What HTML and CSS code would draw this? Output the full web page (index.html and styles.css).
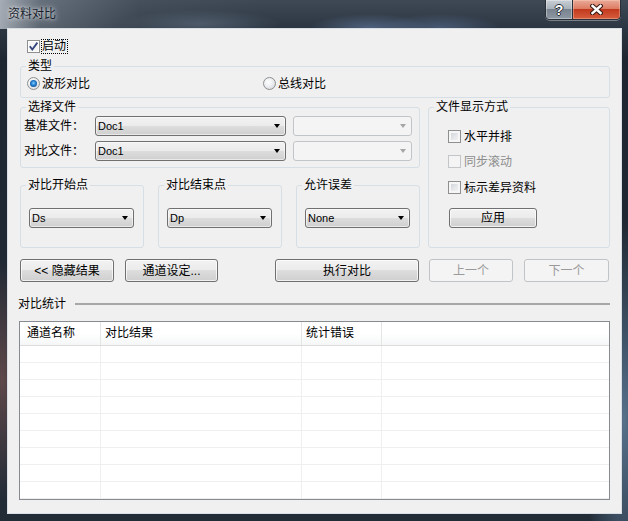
FILE: index.html
```html
<!DOCTYPE html>
<html lang="zh-CN">
<head>
<meta charset="utf-8">
<title>资料对比</title>
<link rel="stylesheet" href="styles.css">
</head>
<body>
<div class="window">
  <div class="titlebar">
    <div class="title">资料对比</div>
    <div class="caption-btns">
      <div class="cap help">?</div>
      <div class="cap close">
        <svg width="13" height="11" viewBox="0 0 13 11"><path d="M2.5 2 L10.5 9 M10.5 2 L2.5 9" stroke="#3b1d16" stroke-width="4.6" stroke-linecap="square" fill="none"/><path d="M2.5 2 L10.5 9 M10.5 2 L2.5 9" stroke="#ffffff" stroke-width="2.4" stroke-linecap="square" fill="none"/></svg>
      </div>
    </div>
  </div>
  <div class="client">
    <div class="enable-row">
      <span class="cb"><svg width="11" height="11" viewBox="0 0 11 11"><path d="M1.8 5.2 L4.3 8.6 L9.4 1.6" stroke="#33437c" stroke-width="1.8" fill="none"/></svg></span><span class="focus-label">启动</span>
    </div>
    <fieldset class="group type-group">
      <legend>类型</legend>
      <div class="type-body">
        <div class="radio-item first"><span class="radio on"></span><span>波形对比</span></div>
        <div class="radio-item"><span class="radio"></span><span>总线对比</span></div>
      </div>
    </fieldset>
    <div class="middle">
      <div class="left-col">
        <fieldset class="group file-group">
          <legend>选择文件</legend>
          <div class="file-body">
            <div class="file-row"><span class="file-label">基准文件：</span><div class="combo main"><span class="combo-text">Doc1</span><i class="arrow"></i></div><div class="combo small disabled"><i class="arrow"></i></div></div>
            <div class="file-row"><span class="file-label">对比文件：</span><div class="combo main"><span class="combo-text">Doc1</span><i class="arrow"></i></div><div class="combo small disabled"><i class="arrow"></i></div></div>
          </div>
        </fieldset>
        <div class="point-row">
          <fieldset class="group point-group">
            <legend>对比开始点</legend>
            <div class="point-body"><div class="combo pt"><span class="combo-text">Ds</span><i class="arrow"></i></div></div>
          </fieldset>
          <fieldset class="group point-group">
            <legend>对比结束点</legend>
            <div class="point-body"><div class="combo pt"><span class="combo-text">Dp</span><i class="arrow"></i></div></div>
          </fieldset>
          <fieldset class="group point-group">
            <legend>允许误差</legend>
            <div class="point-body"><div class="combo pt"><span class="combo-text">None</span><i class="arrow"></i></div></div>
          </fieldset>
        </div>
      </div>
      <fieldset class="group display-group">
        <legend>文件显示方式</legend>
        <div class="display-body">
          <div class="cb-row"><span class="cb"></span><span>水平并排</span></div>
          <div class="cb-row r2 disabled"><span class="cb"></span><span>同步滚动</span></div>
          <div class="cb-row r3"><span class="cb"></span><span>标示差异资料</span></div>
          <button class="btn apply">应用</button>
        </div>
      </fieldset>
    </div>
    <div class="action-row">
      <button class="btn b-hide"><span class="lt">&lt;&lt;</span> 隐藏结果</button>
      <button class="btn b-chan">通道设定<span class="lt">...</span></button>
      <button class="btn b-run">执行对比</button>
      <button class="btn b-prev" disabled>上一个</button>
      <button class="btn b-next" disabled>下一个</button>
    </div>
    <div class="sep-row"><span>对比统计</span><div class="sep-line"></div></div>
    <div class="list">
      <div class="list-head">
        <div class="h c1">通道名称</div>
        <div class="h c2">对比结果</div>
        <div class="h c3">统计错误</div>
        <div class="h c4"></div>
      </div>
      <div class="list-body">
        <div class="row"><div></div><div></div><div></div><div></div></div>
        <div class="row"><div></div><div></div><div></div><div></div></div>
        <div class="row"><div></div><div></div><div></div><div></div></div>
        <div class="row"><div></div><div></div><div></div><div></div></div>
        <div class="row"><div></div><div></div><div></div><div></div></div>
        <div class="row"><div></div><div></div><div></div><div></div></div>
        <div class="row"><div></div><div></div><div></div><div></div></div>
        <div class="row"><div></div><div></div><div></div><div></div></div>
        <div class="row"><div></div><div></div><div></div><div></div></div>
      </div>
    </div>
  </div>
</div>
</body>
</html>
```
FILE: styles.css
```css
* { box-sizing: border-box; }
html, body { margin: 0; padding: 0; }
body {
  width: 628px;
  height: 521px;
  overflow: hidden;
  font-family: "Liberation Sans", "Noto Sans CJK SC", sans-serif;
  font-size: 12px;
  line-height: 14px;
  color: #000;
  background: #1f2832;
}
.window {
  width: 628px;
  height: 521px;
  display: flex;
  flex-direction: column;
  background:
    radial-gradient(ellipse 60px 14px at 370px 28px, rgba(120,150,200,.45), transparent),
    radial-gradient(ellipse 60px 14px at 440px 28px, rgba(110,140,190,.40), transparent),
    radial-gradient(ellipse 80px 14px at 200px 24px, rgba(140,160,185,.30), transparent),
    radial-gradient(ellipse 40px 200px at 624px 420px, rgba(130,170,210,.55), transparent),
    radial-gradient(ellipse 30px 120px at 2px 380px, rgba(170,110,100,.45), transparent),
    linear-gradient(180deg, #3f4956 0px, #2c3642 29px, #1e2731 60px, #222c37 100%);
}
.titlebar {
  flex: none;
  height: 29px;
  display: flex;
  align-items: flex-start;
  padding-left: 8px;
  background: linear-gradient(90deg, rgba(200,206,214,.75) 0px, rgba(150,160,170,.45) 40px, rgba(90,100,112,.25) 140px, rgba(40,50,62,0) 260px);
}
.title {
  margin-top: 7px;
  line-height: 14px;
  color: #141c2c;
  text-shadow: 0 0 6px rgba(255,255,255,.8), 0 0 3px rgba(255,255,255,.7);
}
.caption-btns {
  margin-left: auto;
  margin-right: 7px;
  width: 76px;
  height: 20px;
  display: flex;
  border: 1px solid #2b3038;
  border-top: none;
  border-radius: 0 0 5px 5px;
  overflow: hidden;
  box-shadow: 0 1px 0 rgba(255,255,255,.35);
}
.cap {
  display: flex;
  align-items: center;
  justify-content: center;
}
.help {
  flex: 0 0 27px;
  border-right: 1px solid #2b3038;
  background: linear-gradient(#c9cfd6 0%, #a9b1ba 45%, #79838f 50%, #8e98a3 100%);
  box-shadow: inset 0 0 0 1px rgba(255,255,255,.35);
  color: #fff;
  font-family: "Liberation Sans", sans-serif;
  font-weight: bold;
  font-size: 14px;
  line-height: 14px;
  text-shadow: 1px 0 0 #2a3038, -1px 0 0 #2a3038, 0 1px 0 #2a3038, 0 -1px 0 #2a3038;
}
.close {
  flex: 1;
  background: linear-gradient(#eaab9a 0%, #dc7c63 45%, #c23a1e 50%, #d75d3e 100%);
  box-shadow: inset 0 0 0 1px rgba(255,220,200,.35);
}
.close svg { display: block; }

.client {
  flex: 1;
  margin: 0 7px 8px 8px;
  background: #f0f0f0;
  padding: 10px 11px 0 12px;
  box-shadow: 0 0 0 1px #d9dee4;
}

/* checkbox */
.enable-row {
  display: flex;
  align-items: center;
  height: 15px;
  padding-left: 7px;
}
.cb {
  flex: none;
  width: 13px;
  height: 13px;
  border: 1px solid #8e8f8f;
  background: linear-gradient(135deg, #c9ced4 0%, #e6e8eb 55%, #f7f7f7 100%);
  box-shadow: inset 0 0 0 2px #f6f6f6;
  display: flex;
}
.cb svg { display: block; }
.enable-row .cb { margin-right: 1px; background: #f4f4f4; box-shadow: inset 0 0 0 1px #fff; }
.focus-label {
  border: 1px dotted #000;
  padding: 0 1px 0 0;
  line-height: 13px;
}

/* group boxes */
.group {
  margin: 0;
  padding: 0;
  border: 1px solid #d5dfe5;
  border-radius: 3px;
  min-width: 0;
}
.group legend {
  margin-left: 5px;
  padding: 0 2px;
  line-height: 14px;
  font-size: 12px;
}
.type-group { margin-top: 5px; }
.type-body {
  display: flex;
  padding: 3px 0 6px 6px;
}
.radio-item {
  display: flex;
  align-items: center;
  gap: 2px;
  height: 15px;
}
.radio-item.first { width: 236px; }
.radio {
  flex: none;
  width: 13px;
  height: 13px;
  border-radius: 50%;
  border: 1px solid #8e8f8f;
  background: radial-gradient(circle at 40% 38%, #ffffff 0, #eceef0 45%, #cdd1d6 100%);
  display: flex;
  align-items: center;
  justify-content: center;
}
.radio.on::after {
  content: "";
  width: 7px;
  height: 7px;
  border-radius: 50%;
  background: radial-gradient(circle at 50% 45%, #7fd0ff 0, #1f79cc 45%, #0d3a6e 100%);
}

.middle {
  display: flex;
  gap: 8px;
  margin-top: 2px;
}
.left-col {
  width: 400px;
  display: flex;
  flex-direction: column;
}
.file-body {
  display: flex;
  flex-direction: column;
  gap: 5px;
  padding: 2px 0 6px 3px;
}
.file-row {
  display: flex;
  align-items: center;
  height: 20px;
}
.file-label { width: 71px; }

.combo {
  height: 20px;
  display: flex;
  align-items: center;
  padding-left: 2px;
  border: 1px solid #707070;
  border-radius: 3px;
  background: linear-gradient(#f2f2f2 0%, #ebebeb 50%, #dddddd 50%, #cfcfcf 100%);
  box-shadow: inset 0 0 0 1px rgba(255,255,255,.55);
}
.combo-text {
  font-family: "Liberation Sans", sans-serif;
  font-size: 11px;
  line-height: 14px;
}
.arrow {
  margin-left: auto;
  margin-right: 5px;
  width: 0;
  height: 0;
  border-left: 3.5px solid transparent;
  border-right: 3.5px solid transparent;
  border-top: 4px solid #000;
}
.combo.main { width: 191px; }
.combo.small { width: 119px; margin-left: 7px; }
.combo.disabled {
  border-color: #c1c5c9;
  background: #f4f4f4;
  box-shadow: none;
}
.combo.disabled .arrow { border-top-color: #a6a6a6; }

.point-row {
  display: flex;
  gap: 14px;
  margin-top: 10px;
}
.point-group { width: 124px; }
.point-body { padding: 16px 0 19px 8px; }
.combo.pt { width: 105px; }

.display-group { width: 182px; }
.display-body {
  display: flex;
  flex-direction: column;
  align-items: flex-start;
  padding: 15px 0 19px 19px;
}
.cb-row {
  display: flex;
  align-items: center;
  gap: 3px;
  height: 15px;
}
.cb-row.r2 { margin-top: 10px; }
.cb-row.r3 { margin-top: 11px; }
.cb-row.disabled { color: #8d8d8d; }
.cb-row.disabled .cb {
  border-color: #c3c6c9;
  background: #f4f4f4;
  box-shadow: none;
}

/* buttons */
.btn {
  font-family: "Liberation Sans", "Noto Sans CJK SC", sans-serif;
  font-size: 12px;
  line-height: 14px;
  color: #000;
  height: 23px;
  padding: 0;
  margin: 0;
  border: 1px solid #707070;
  border-radius: 3px;
  background: linear-gradient(#f2f2f2 0%, #ebebeb 49%, #dddddd 50%, #cfcfcf 100%);
  box-shadow: inset 0 0 0 1px rgba(255,255,255,.7);
}
.btn:disabled {
  color: #9a9a9a;
  border-color: #c0c4c8;
  background: #f4f4f4;
  box-shadow: none;
}
.btn.apply {
  width: 88px;
  height: 20px;
  margin-top: 13px;
  margin-left: 1px;
}
.lt { font-family: "Liberation Sans", sans-serif; }
.action-row {
  display: flex;
  margin-top: 11px;
  height: 23px;
}
.b-hide { width: 94px; }
.b-chan { width: 93px; margin-left: 11px; }
.b-run { width: 144px; margin-left: 57px; }
.b-prev { width: 84px; margin-left: 10px; }
.b-next { width: 85px; margin-left: 11px; }

.sep-row {
  display: flex;
  align-items: center;
  height: 16px;
  margin-top: 14px;
  margin-left: -2px;
  line-height: 16px;
}
.sep-line {
  flex: 1;
  height: 2px;
  margin-left: 9px;
  background: #a7a7a7;
}

/* list view */
.list {
  margin-top: 9px;
  margin-left: -1px;
  width: 591px;
  height: 179px;
  border: 1px solid #868a91;
  background: #fff;
}
.list-head {
  display: grid;
  grid-template-columns: 81px 201px 80px 1fr;
  height: 24px;
  background: linear-gradient(#ffffff 0%, #ffffff 50%, #f5f6f7 100%);
  border-bottom: 1px solid #dcdcdc;
}
.h {
  line-height: 23px;
  border-right: 1px solid #e3e5e8;
  padding-left: 4px;
}
.h.c1 { padding-left: 7px; }
.h.c4 { border-right: none; }
.row {
  display: grid;
  grid-template-columns: 81px 201px 80px 1fr;
  height: 17px;
}
.row > div {
  border-right: 1px solid #efefef;
  border-bottom: 1px solid #efefef;
}
.row > div:last-child { border-right: none; }
```
